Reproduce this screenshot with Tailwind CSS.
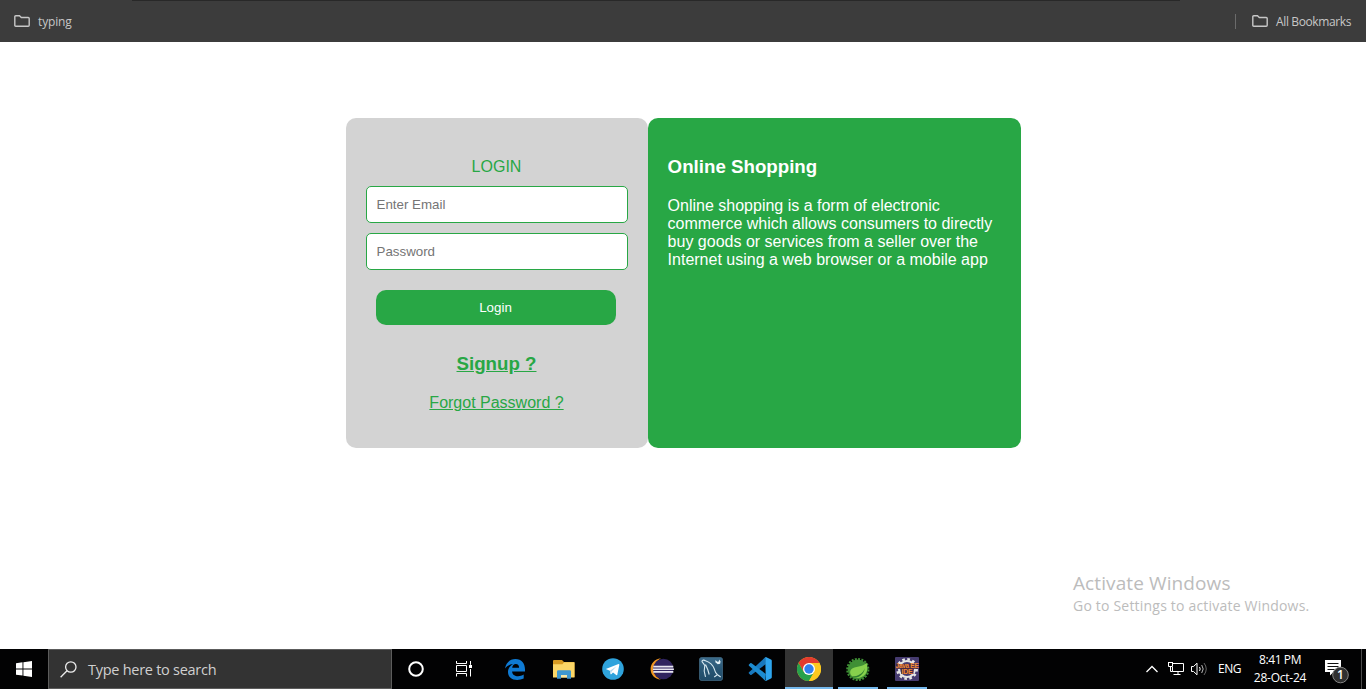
<!DOCTYPE html>
<html lang="en">
<head>
<meta charset="utf-8">
<title>Login</title>
<script src="https://cdn.jsdelivr.net/npm/@tailwindcss/browser@4"></script>
</head>
<body class="w-[1366px] h-[689px] overflow-hidden bg-white flex flex-col font-['Liberation_Sans',Arial,sans-serif]">

<!-- Bookmarks bar -->
<header class="h-[42px] shrink-0 bg-[#3c3c3c] text-[#c7c7c7] font-['Open_Sans','Noto_Sans',sans-serif] text-[12px]">
  <div class="h-px ml-[132px] w-[1048px] bg-[#282828]"></div>
  <div class="h-[40px] pl-[14px] pr-[15px] flex items-center justify-between">
    <div class="flex items-center gap-2">
      <svg width="16" height="12" viewBox="0 0 16 12" fill="none" stroke="#c7c7c7" stroke-width="1.4"><path d="M.8 10.2V1.8q0-1 1-1h3.7l1.8 1.7h6.9q1 0 1 1v6.7q0 1-1 1H1.8q-1 0-1-1z"/></svg>
      <span class="tracking-[-0.15px] pt-px">typing</span>
    </div>
    <div class="flex items-center">
      <div class="w-px h-[15px] bg-[#6b6b6b] mr-4"></div>
      <svg class="mr-2" width="16" height="12" viewBox="0 0 16 12" fill="none" stroke="#c7c7c7" stroke-width="1.4"><path d="M.8 10.2V1.8q0-1 1-1h3.7l1.8 1.7h6.9q1 0 1 1v6.7q0 1-1 1H1.8q-1 0-1-1z"/></svg>
      <span class="w-[75px] whitespace-nowrap tracking-[-0.37px] pt-px">All Bookmarks</span>
    </div>
  </div>
</header>

<main class="relative flex-1 pt-[76px] pl-[346px]">
  <div class="flex h-[330px]">
    <form class="w-[302px] rounded-[10px] bg-[#d3d3d3] text-[#28a745] px-5 pt-[40px] flex flex-col items-center">
      <p class="text-[16px] leading-[18px] mr-px">LOGIN</p>
      <input type="text" placeholder="Enter Email" class="mt-[10px] w-[262px] h-[37px] rounded-[5px] border border-[#28a745] bg-white px-[9.5px] text-[13.333px] placeholder:text-[#757575]">
      <input type="password" placeholder="Password" class="mt-[10px] w-[262px] h-[37px] rounded-[5px] border border-[#28a745] bg-white px-[9.5px] text-[13.333px] placeholder:text-[#757575]">
      <button type="button" class="mt-5 mr-[2px] w-[240px] h-[35px] rounded-[10px] bg-[#28a745] text-white text-[13.333px] pr-px">Login</button>
      <a class="mt-[28px] mr-px text-[18.72px] leading-[21px] font-bold underline">Signup ?</a>
      <a class="mt-[20px] mr-px text-[16px] leading-[18px] underline">Forgot Password ?</a>
    </form>
    <section class="w-[373px] rounded-[10px] bg-[#28a745] text-white pl-[19.6px] pr-5 pt-[38px]">
      <h3 class="text-[18.72px] leading-[21px] font-bold">Online Shopping</h3>
      <p class="mt-[20px] text-[16px] leading-[18px] whitespace-nowrap">Online shopping is a form of electronic<br>commerce which allows consumers to directly<br>buy goods or services from a seller over the<br>Internet using a web browser or a mobile app</p>
    </section>
  </div>
  <!-- Activation notice floats over the page -->
  <div class="absolute left-[1073px] top-[528px] text-[#bcbcbc] font-['Open_Sans','Noto_Sans',sans-serif] whitespace-nowrap">
    <div class="text-[19px] leading-[26px] tracking-[0.1px]">Activate Windows</div>
    <div class="text-[14px] leading-[20px] tracking-[0.2px]">Go to Settings to activate Windows.</div>
  </div>
</main>

<!-- Taskbar -->
<footer class="h-[40px] shrink-0 bg-[#020203] text-white flex font-['Open_Sans','Noto_Sans',sans-serif]">
  <div class="w-[48px] flex items-center justify-center">
    <svg width="16" height="16" viewBox="0 0 16 16" fill="#fff"><path d="M0 2.2 6.5 1.3V7.5H0zM7.4 1.2 16 0V7.5H7.4zM0 8.4H6.5V14.6L0 13.7zM7.4 8.4H16V16L7.4 14.8z"/></svg>
  </div>
  <div class="w-[344px] bg-[#333] border border-[#5c5c5c] flex items-center pl-[11px]">
    <svg class="shrink-0" width="17" height="17" viewBox="0 0 17 17" fill="none" stroke="#ececec" stroke-width="1.3"><circle cx="10.8" cy="6" r="5.2"/><path d="M7 9.8.6 16.3"/></svg>
    <span class="ml-[11px] pt-[2px] text-[14.5px] text-[#d0d0d0] tracking-[-0.27px] whitespace-nowrap">Type here to search</span>
  </div>
  <div class="w-[48px] flex items-center justify-center">
    <svg width="18" height="18" viewBox="0 0 18 18" fill="none" stroke="#fff" stroke-width="2"><circle cx="9" cy="9" r="6.8"/></svg>
  </div>
  <div class="w-[48px] flex items-center justify-center">
    <svg width="16" height="16" viewBox="0 0 16 16" fill="none" stroke="#fff" stroke-width="1"><path d="M.5 0v2.500h10V0M.5 4.500h10v6H.5zM.5 15.500v-3h10v3M14.500 0v3.800M14.500 8v7.500"/><path d="M13 4h3v3h-3z" fill="#fff" stroke="none"/></svg>
  </div>
  <div class="flex gap-px ml-[3px]">
    <div class="w-[48px] flex items-center justify-center">
      <svg width="20" height="21" viewBox="0 0 20 21" fill="#0f7ad3"><path d="M0 9.6C.9 3.9 4.9 0 10.4 0 16.7 0 20 4.7 20 10.3v2.2H7.1c.1 3.2 2.8 4.7 6 4.7 2 0 3.9-.6 5.6-1.6v4c-2 .9-4.2 1.4-6.5 1.4C6.700 21 3 17.900 3 13c0-3.500 2-6.400 5-7.900C4.700 5.300 1.700 7 0 9.600zM7.200 8.700h6.900c0-2.300-1.100-3.800-3.300-3.800-2 0-3.300 1.600-3.600 3.800z"/></svg>
    </div>
    <div class="w-[48px] flex items-center justify-center">
      <svg width="22" height="19" viewBox="0 0 22 19"><path d="M0 1q0-1 1-1h8l2 2h9.500q1 0 1 1v14H0z" fill="#d79a22"/><path d="M0 4.200h9.500l1.500-2h10.500V17.500H0z" fill="#fbd667"/><path d="M4 18.800v-7.300q0-1.200 1.200-1.200h11.600q1.200 0 1.200 1.200v7.300h-4v-3.900H8v3.900z" fill="#3e97cf"/><path d="M8 15h6v2.500H8z" fill="#f6e6a7"/></svg>
    </div>
    <div class="w-[48px] flex items-center justify-center">
      <svg width="22" height="22" viewBox="0 0 22 22"><circle cx="11" cy="11" r="10.800" fill="#2fa3dc"/><path d="M3.800 11 16.500 6.100q1-.2.800.9l-2 9.700q-.3.900-1.100.3L11 14.500l-1.700 1.700-.8.100-.6-3.500z" fill="#fff"/><path d="m7.900 12.700 6.700-4.500-5 5.300-.7 2.600z" fill="#b2d8ed"/></svg>
    </div>
    <div class="w-[48px] flex items-center justify-center">
      <svg width="24" height="22" viewBox="0 0 24 22"><path d="M11 .2C4.500 1 .6 5.500.6 11S4.500 21 11 21.800C6.800 19.500 4.200 16 4.200 11S6.800 2.500 11 .2z" fill="#f09622"/><circle cx="13.300" cy="11" r="10.300" fill="#30245f"/><path d="M3.300 7.700h20v1.700H3.300zM3 10.400h20.900v1.600H3zM3.300 13h20v1.700H3.300z" fill="#e8e6f0"/></svg>
    </div>
    <div class="w-[48px] flex items-center justify-center">
      <svg width="24" height="24" viewBox="0 0 24 24"><defs><linearGradient id="db" x1="0" y1="0" x2="0" y2="1"><stop offset="0" stop-color="#3c6c8c"/><stop offset=".5" stop-color="#285674"/><stop offset="1" stop-color="#204b68"/></linearGradient></defs><rect x=".4" y=".4" width="23.200" height="23.200" rx="2.500" fill="url(#db)" stroke="#426984" stroke-width=".8"/><path d="M6.500 19.800 5.200 14 5.800 8.500 3 4.500c0-1.600 2-1.800 3.500-.8 4 1.300 7.300 4 8.800 8.300.7 2.600 1.200 4.500 3.200 5.800l3.200 2.200M6.500 7.500l2.300 5.300 1.400 4.700M18 18l-2.800 2" fill="none" stroke="#d6e7ef" stroke-width="1.100"/><path d="m16.500 3 1.800 1.700 1.500-.3.300-2 1.500 2-.5 2.400-2.300.4-2.500-2z" fill="#e4f1f7"/></svg>
    </div>
    <div class="w-[48px] flex items-center justify-center">
      <svg width="24" height="24" viewBox="0 0 24 24"><path d="M17.200.3 1 15.200q-.6.700 0 1.400l1.200 1.200q.7.500 1.400 0L17.800 7.100z" fill="#1878bd"/><path d="M17.200 23.700 1 8.800q-.6-.7 0-1.400l1.200-1.200q.7-.5 1.400 0l14.200 10.700z" fill="#1c8bd0"/><path d="M17.200.3q.6-.4 1.200-.1L23 2.400q.8.400.8 1.300v16.600q0 .9-.8 1.300l-4.600 2.200q-.6.300-1.200-.1l.6-1z" fill="#2ea5ee"/></svg>
    </div>
    <div class="w-[48px] bg-[#343434] border-b-2 border-[#76b9ed] flex items-center justify-center pt-[2px]">
      <svg width="24" height="24" viewBox="0 0 24 24"><circle cx="12" cy="12" r="12" fill="#fcc91f"/><path d="M1.600 6A12 12 0 0 1 22.400 6H12L6.800 15z" fill="#e33b2e"/><path d="M1.600 6A12 12 0 0 0 12 24l5.200-9L12 16.500 6.800 15z" fill="#27a14c"/><path d="M12 6h10.400A12 12 0 0 1 12 24l5.200-9z" fill="#fcc91f"/><circle cx="12" cy="12" r="6" fill="#fff"/><circle cx="12" cy="12" r="4.700" fill="#3180ee"/></svg>
    </div>
    <div class="w-[48px] flex flex-col items-center justify-between pt-[8px]">
      <svg width="24" height="24" viewBox="0 0 24 24"><circle cx="11.800" cy="12.500" r="10" fill="#3f8f35"/><circle cx="11.800" cy="12.500" r="10.600" fill="none" stroke="#3f8f35" stroke-width="2" stroke-dasharray="2 1.330"/><path d="M20.500 5.500c1.200 4 1.300 8-.9 11.300-2.600 4-8.400 5-12 3.400-3.600-1.800-4.400-5.400-2.300-8C8.400 8.700 17 11 20.500 5.500z" fill="#86d14c"/><path d="M6 19.500C12 19.300 16.800 16.500 19 11.200c-1.400 6.300-6.300 10-11.600 9.300z" fill="#2f7f30"/></svg>
      <div class="w-[40px] h-[2px] bg-[#76b9ed]"></div>
    </div>
    <div class="w-[48px] flex flex-col items-center justify-between pt-[8px]">
      <div class="relative w-[24px] h-[24px]">
        <svg width="24" height="24" viewBox="0 0 24 24"><rect width="24" height="24" rx="1" fill="#463b70"/><circle cx="12" cy="12" r="8" fill="none" stroke="#e6e6e6" stroke-width="2.200"/><circle cx="12" cy="12" r="9.700" fill="none" stroke="#e6e6e6" stroke-width="2.500" stroke-dasharray="2.600 2.480"/><path d="M1 7h22v5h-4.500v5H6v-5H1z" fill="#49263e" fill-opacity=".85"/></svg>
        <div class="absolute inset-x-[-3px] top-[6px] flex flex-col items-center font-['Liberation_Sans',sans-serif] text-[6.5px] leading-[6px] font-bold text-[#f28b35] whitespace-nowrap tracking-[-0.3px]"><span>Java EE</span><span class="text-[7px]">IDE</span></div>
      </div>
      <div class="w-[40px] h-[2px] bg-[#76b9ed]"></div>
    </div>
  </div>

  <!-- System tray -->
  <div class="ml-auto flex items-center">
    <svg class="mr-[10px]" width="12" height="8" viewBox="0 0 12 8" fill="none" stroke="#fff" stroke-width="1.300"><path d="m.5 7 5.500-5.500L11.500 7"/></svg>
    <svg class="mr-[7px]" width="16" height="14" viewBox="0 0 16 14" fill="none" stroke="#fff"><path d="M5 1.500h10.500v8H4.500V5M10 9.500v3M5.500 12.500h7M.5 1v3.500h4V1M0 .5h5M2.500 4.500V9.500h2"/></svg>
    <svg class="mr-[10px]" width="17" height="14" viewBox="0 0 17 14" fill="none" stroke="#fff"><path d="M.5 4.500h2L6 1.200v11.600L2.500 9.500h-2z"/><path d="M8.500 5q1.400 2 0 4"/><path d="M10.700 3q3 4 0 8" stroke="#bbb"/><path d="M13 1q4.500 6 0 12" stroke="#666"/></svg>
    <span class="w-[24px] text-[12px] tracking-[-0.5px] whitespace-nowrap">ENG</span>
    <div class="w-[54px] ml-[11px] flex flex-col items-center text-[12px] leading-[18px] tracking-[-0.25px] whitespace-nowrap">
      <span class="tracking-[-0.4px]">8:41 PM</span>
      <span>28-Oct-24</span>
    </div>
    <svg class="ml-[18px] mr-[12px] mt-[5px]" width="24" height="26" viewBox="0 0 24 26"><path d="M0 1h16v12H8.500L5 16.500V13H0z" fill="#fff"/><path d="M2.500 4.500h11M2.500 7.500h11M2.500 10.500h7" stroke="#111"/><circle cx="15.500" cy="16" r="7.800" fill="#303030" stroke="#858585"/><text x="15.500" y="20" text-anchor="middle" font-family="Open Sans, sans-serif" font-size="12" font-weight="600" fill="#fff">1</text></svg>
    <div class="w-[5px] h-[40px] border-l border-[#4b4b4b]"></div>
  </div>
</footer>
</body>
</html>
